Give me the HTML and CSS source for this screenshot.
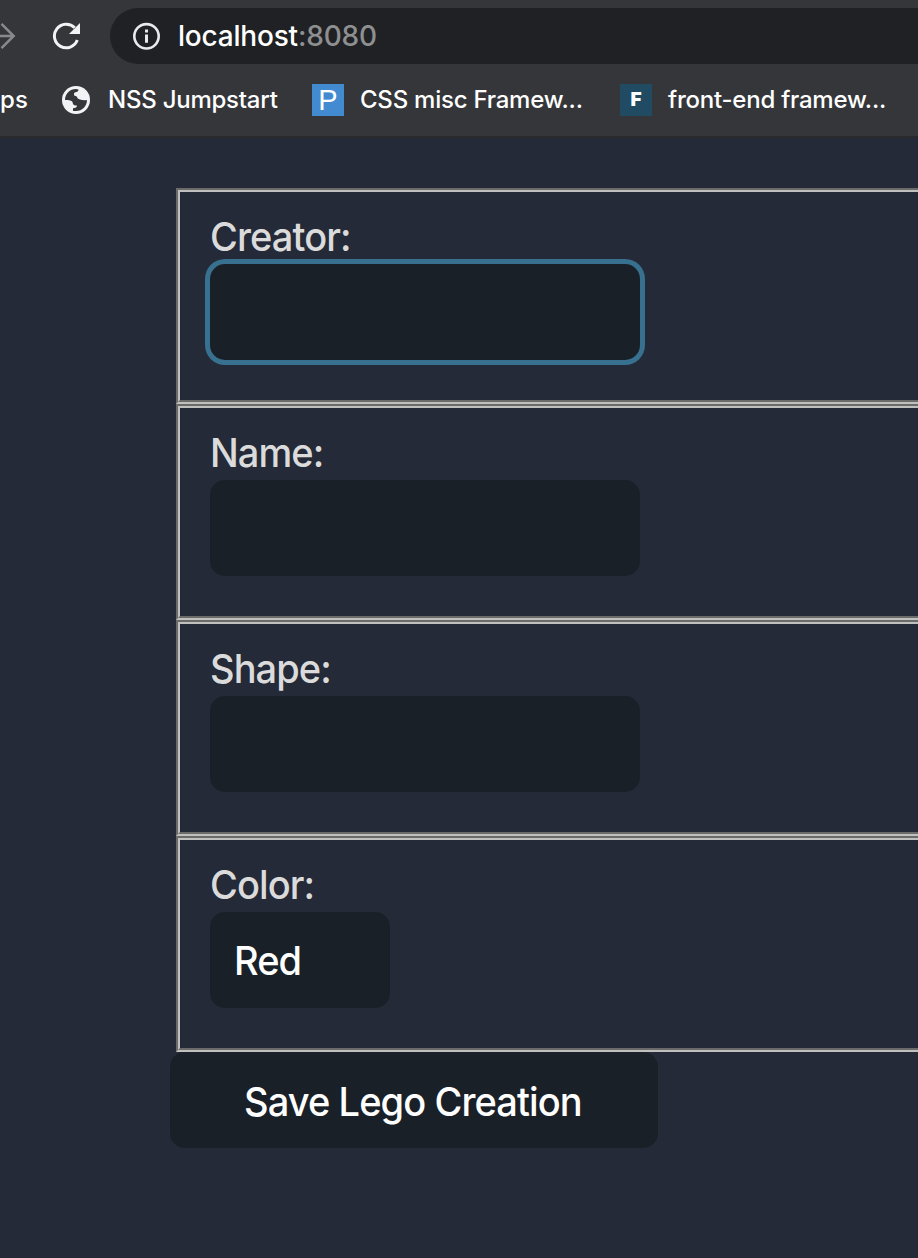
FILE: index.html
```html
<!DOCTYPE html>
<html lang="en">
<head>
<meta charset="utf-8">
<title>Lego Creations</title>
<link rel="stylesheet" href="styles.css">
</head>
<body>
<header class="chrome">
  <div class="toolbar">
    <svg class="forward" width="16" height="28" viewBox="0 0 16 28" fill="none" stroke="#88898c" stroke-width="2.5"><path d="M0 14H14M1.500 1.800L13.700 14L1.500 26.200"/></svg>
    <svg class="reload" width="30" height="28" viewBox="0 0 30 28"><path d="M25.300 18.100A11.800 11.800 0 1 1 22.700 5.800" fill="none" stroke="#f1f3f4" stroke-width="3"/><path d="M28 1V12H17Z" fill="#f1f3f4"/></svg>
    <div class="address">
      <svg class="info" width="28" height="28" viewBox="0 0 28 28"><circle cx="13.5" cy="14.3" r="12.2" fill="none" stroke="#e8eaed" stroke-width="2.6"/><path d="M12 7.500h3v3h-3zM12 12.500h3v8.200h-3z" fill="#e8eaed"/></svg>
      <span class="url"><span class="host">localhost</span><span class="port">:8080</span></span>
    </div>
  </div>
  <nav class="bookmarks">
    <span class="bookmark apps">ps</span>
    <svg class="globe" width="28" height="28" viewBox="0 0 28 28"><circle cx="14" cy="14" r="14" fill="#f1f3f4"/><path d="M3 14C3 7.900 7.900 3 14 3L16.500 3.400C16.500 5.500 15 6 13.500 6.200C12 6.500 12 7.500 12 8.500C12 9.800 13 10.200 14.500 10.200C15.500 12 16 13 18 13.500C20 14 22 14.500 25 14C25 20 20.500 25 14 25H11V22.200C13.500 22.200 15 21.500 15 19.500C11 19.500 11 18 10.500 16C9.500 14.500 7.500 14 3 14Z" fill="#35363a"/></svg>
    <span class="bookmark jumpstart">NSS Jumpstart</span>
    <span class="favicon favicon-p">P</span>
    <span class="bookmark misc">CSS misc Framew...</span>
    <span class="favicon favicon-f">F</span>
    <span class="bookmark frontend">front-end framew...</span>
  </nav>
</header>
<main class="page">
  <form class="form">
    <div class="group"><div class="group-inner"><label class="label"><span class="text">Creator:</span></label><div class="field focused"></div></div></div>
    <div class="group"><div class="group-inner"><label class="label"><span class="text">Name:</span></label><div class="field"></div></div></div>
    <div class="group"><div class="group-inner"><label class="label"><span class="text">Shape:</span></label><div class="field"></div></div></div>
    <div class="group"><div class="group-inner"><label class="label"><span class="text">Color:</span></label><div class="field select"><span class="text">Red</span></div></div></div>
    <div class="save"><span class="text">Save Lego Creation</span></div>
  </form>
</main>
</body>
</html>
```
FILE: styles.css
```css
* { box-sizing: border-box; }
body {
  margin: 0;
  height: 1258px;
  overflow: hidden;
  background: #242a37;
  font-family: Inter, "Liberation Sans", sans-serif;
  white-space: nowrap;
}
svg { display: block; flex: none; }
.chrome {
  height: 138px;
  padding-top: 8px;
  background: #35363a;
  border-bottom: 2px solid #292a2b;
}
.toolbar { display: flex; align-items: center; height: 56px; }
.reload { margin-left: 36px; }
.address {
  display: flex;
  align-items: center;
  flex: 1;
  height: 56px;
  margin-left: 28px;
  padding-left: 23px;
  border-radius: 28px 0 0 28px;
  background: #202124;
}
.url { margin-left: 17px; font-size: 28px; font-weight: 450; letter-spacing: -0.2px; line-height: 57px; }
.host { color: #fff; }
.port { color: #8e8f91; }
.bookmarks { display: flex; align-items: center; height: 72px; color: #fff; }
.bookmark { flex: none; font-size: 24px; font-weight: 450; letter-spacing: -0.23px; line-height: 32px; }
.apps { width: 62px; letter-spacing: 0.2px; }
.jumpstart { width: 204px; margin-left: 18px; }
.favicon { flex: none; width: 32px; height: 32px; text-align: center; }
.favicon-p {
  background: #428bd0;
  font: 29px/32px "Liberation Sans", sans-serif;
}
.misc { width: 260px; margin-left: 16px; }
.favicon-f { background: #214b63; font-size: 19px; font-weight: 900; line-height: 32px; }
.frontend { margin-left: 16px; }
.page { padding: 50px 0 0 176px; }
.group {
  height: 216px;
  border: 2px solid;
  border-color: #6c6b6b #c0c0bf #c0c0bf #6c6b6b;
  border-right: 0;
}
.group-inner {
  height: 212px;
  padding: 20px 30px 0;
  border: 2px solid;
  border-color: #c0c0bf #6c6b6b #6c6b6b #c0c0bf;
  border-right: 0;
}
.text {
  display: inline-block;
  font-size: 40px;
  font-weight: 450;
  letter-spacing: -0.95px;
  transform: scaleX(0.95);
  transform-origin: 0 50%;
}
.label {
  display: block;
  height: 52px;
  color: #dbdbdb;
  line-height: 49px;
}
.field {
  width: 430px;
  height: 96px;
  border-radius: 15px;
  background: #1a2027;
  color: #fff;
  line-height: 97px;
}
.focused { box-shadow: 0 0 0 5px #38718f; }
.select { width: 180px; padding-left: 24px; }
.save {
  width: 488px;
  height: 96px;
  margin-left: -6px;
  padding-left: 74px;
  border-radius: 15px;
  background: #1a2027;
  color: #fff;
  line-height: 100px;
}
```
